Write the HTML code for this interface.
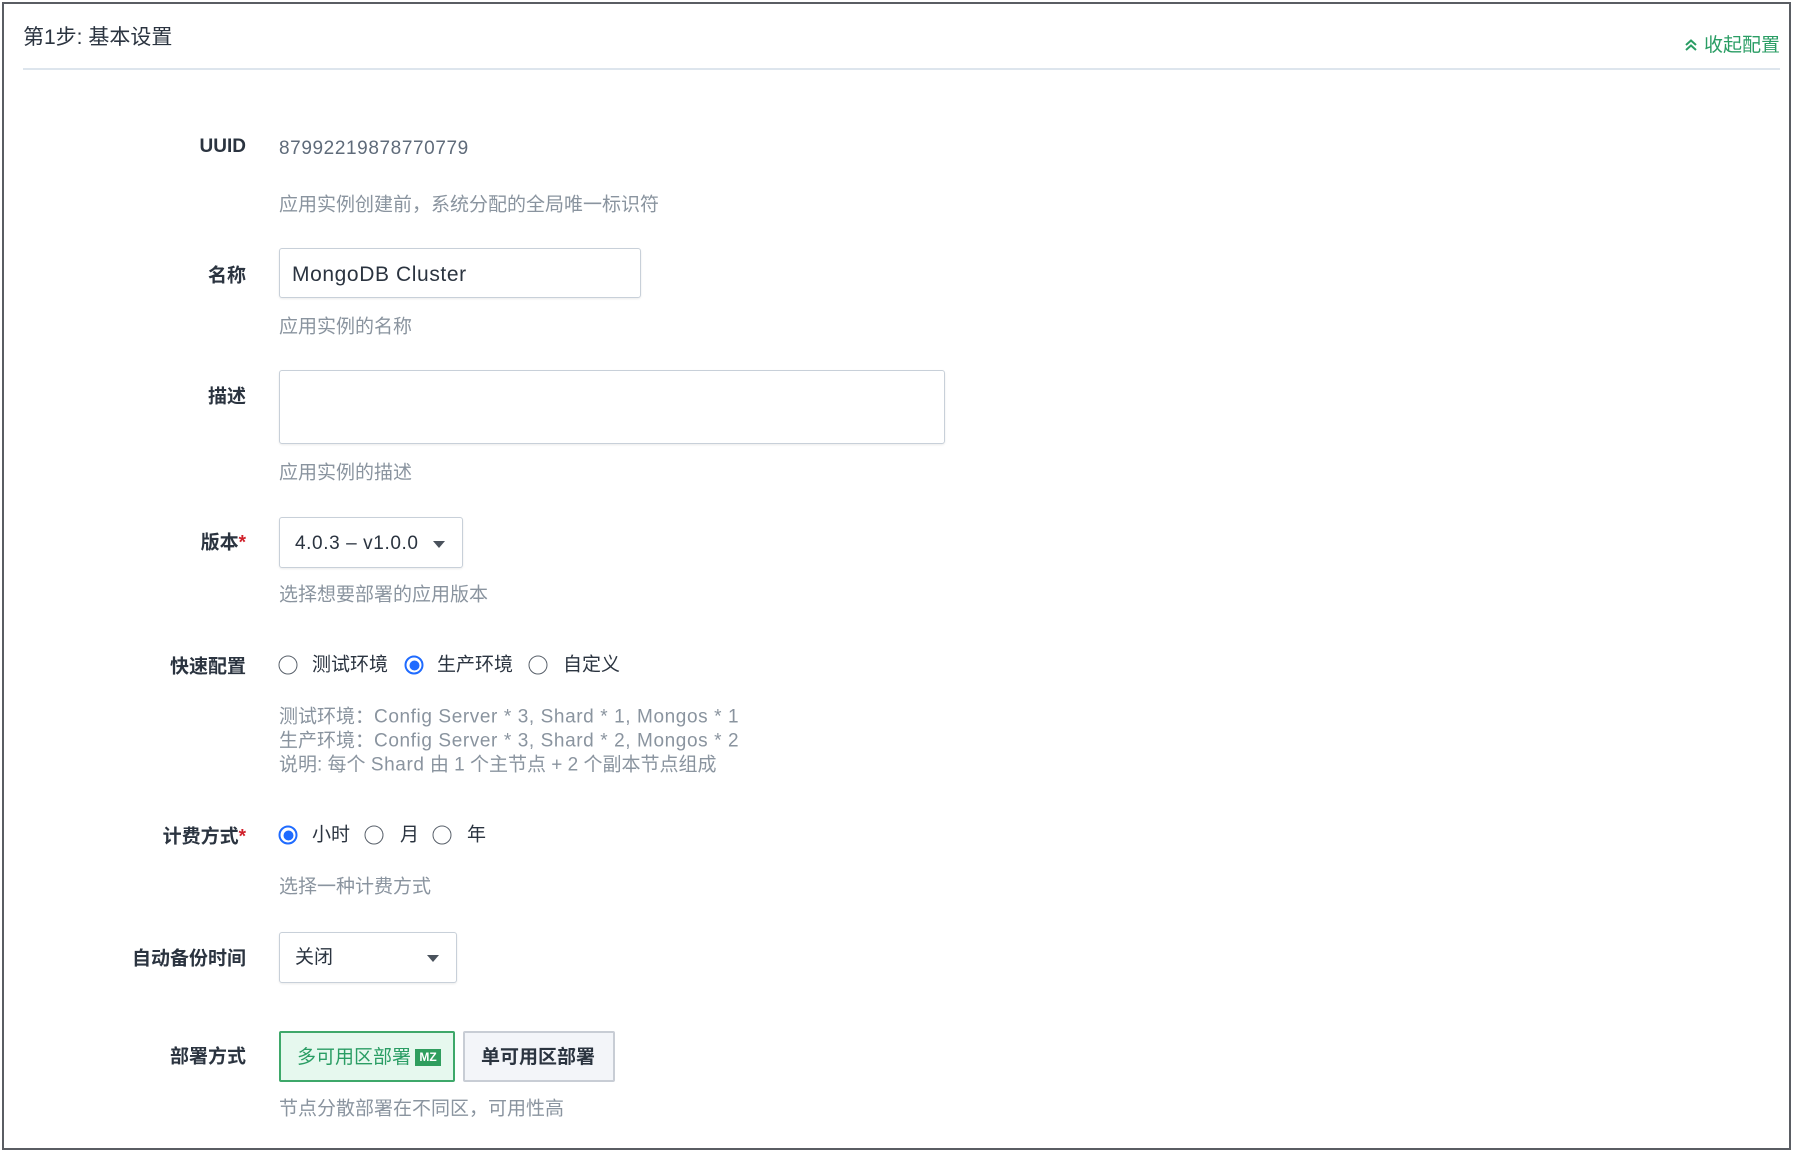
<!DOCTYPE html>
<html><head><meta charset="utf-8"><style>
*{box-sizing:border-box;margin:0;padding:0}
body{width:1794px;height:1152px;background:#fff;font-family:"Liberation Sans","Noto Sans CJK SC",sans-serif;position:relative;overflow:hidden;color:#2b3440}
.frame{position:absolute;left:2px;top:2px;width:1789px;height:1148px;border:2px solid #5a5d63}
.a{position:absolute;white-space:nowrap;line-height:1}
.lbl{position:absolute;right:1548px;font-size:19px;font-weight:bold;color:#2b3440;white-space:nowrap;transform:translateY(-50%)}
.help{position:absolute;left:279px;font-size:19px;color:#8a949f;white-space:nowrap;transform:translateY(-50%)}
.lat{letter-spacing:0.6px}
.box{position:absolute;border:1.5px solid #c8d0d9;border-radius:3px;background:#fff;box-shadow:0 1px 2px rgba(0,0,0,.08)}
.caret{position:absolute;width:0;height:0;border-left:6px solid transparent;border-right:6px solid transparent;border-top:7px solid #4a525c}
.r{position:absolute;width:19px;height:19px;border-radius:50%;border:1.5px solid #59616b;transform:translate(-50%,-50%);background:#fff}
.r.on{border:2px solid #1f6bff}
.r.on::after{content:"";position:absolute;left:2.5px;top:2.5px;width:10px;height:10px;border-radius:50%;background:#1f6bff}
.rt{position:absolute;font-size:19px;color:#2b3440;transform:translateY(-50%);white-space:nowrap}
.star{color:#d0202a}
</style></head><body>
<div class="frame"></div>
<div class="a" style="left:23px;top:27px;font-size:21px;color:#2b3440">第1步: 基本设置</div>
<div class="a" style="right:14px;top:36px;font-size:19px;color:#2a9d64">
<svg width="14" height="14" viewBox="0 0 14 14" style="vertical-align:-1px;margin-right:6px"><path d="M2 7 L7 2.5 L12 7 M2 12 L7 7.5 L12 12" fill="none" stroke="#2a9d64" stroke-width="2"/></svg>收起配置</div>
<div style="position:absolute;left:23px;top:68px;width:1757px;height:2px;background:#dde5ed"></div>

<div class="lbl" style="top:147px">UUID</div>
<div class="a lat" style="left:279px;top:139px;font-size:19px;color:#5f6b7a">87992219878770779</div>
<div class="help" style="top:203px">应用实例创建前，系统分配的全局唯一标识符</div>

<div class="lbl" style="top:274px">名称</div>
<div class="box" style="left:279px;top:248px;width:362px;height:50px"></div>
<div class="a lat" style="left:292px;top:264px;font-size:21px;color:#2b3440">MongoDB Cluster</div>
<div class="help" style="top:325px">应用实例的名称</div>

<div class="lbl" style="top:395px">描述</div>
<div class="box" style="left:279px;top:370px;width:666px;height:74px"></div>
<div class="help" style="top:471px">应用实例的描述</div>

<div class="lbl" style="top:541px">版本<span class="star">*</span></div>
<div class="box" style="left:279px;top:517px;width:184px;height:51px"></div>
<div class="a lat" style="left:295px;top:534px;font-size:19px;color:#2b3440">4.0.3 – v1.0.0</div>
<div class="caret" style="left:433px;top:541px"></div>
<div class="help" style="top:593px">选择想要部署的应用版本</div>

<div class="lbl" style="top:665px">快速配置</div>
<div class="r" style="left:288px;top:665px"></div><div class="rt" style="left:312px;top:663px">测试环境</div>
<div class="r on" style="left:414px;top:665px"></div><div class="rt" style="left:437px;top:663px">生产环境</div>
<div class="r" style="left:538px;top:665px"></div><div class="rt" style="left:563px;top:663px">自定义</div>
<div class="help" style="top:715px">测试环境：<span class="lat">Config Server * 3, Shard * 1, Mongos * 1</span></div>
<div class="help" style="top:739px">生产环境：<span class="lat">Config Server * 3, Shard * 2, Mongos * 2</span></div>
<div class="help" style="top:763px">说明: 每个 <span class="lat">Shard</span> 由 1 个主节点 + 2 个副本节点组成</div>

<div class="lbl" style="top:835px">计费方式<span class="star">*</span></div>
<div class="r on" style="left:288px;top:835px"></div><div class="rt" style="left:312px;top:833px">小时</div>
<div class="r" style="left:374px;top:835px"></div><div class="rt" style="left:400px;top:833px">月</div>
<div class="r" style="left:442px;top:835px"></div><div class="rt" style="left:467px;top:833px">年</div>
<div class="help" style="top:885px">选择一种计费方式</div>

<div class="lbl" style="top:957px">自动备份时间</div>
<div class="box" style="left:279px;top:932px;width:178px;height:51px"></div>
<div class="a" style="left:295px;top:948px;font-size:19px;color:#2b3440">关闭</div>
<div class="caret" style="left:427px;top:955px"></div>

<div class="lbl" style="top:1055px">部署方式</div>
<div style="position:absolute;left:279px;top:1031px;width:176px;height:51px;border:2px solid #3ea86a;background:#e6f8ee;border-radius:2px"></div>
<div class="a" style="left:297px;top:1048px;font-size:19px;color:#2a9d64">多可用区部署</div>
<div class="a" style="left:415px;top:1049px;width:26px;height:17px;background:#2f9e5e;color:#fff;font-size:12px;font-weight:bold;text-align:center;line-height:17px">MZ</div>
<div style="position:absolute;left:463px;top:1031px;width:152px;height:51px;border:2px solid #c8cdd5;background:#f3f5f9;border-radius:2px"></div>
<div class="a" style="left:481px;top:1048px;font-size:19px;font-weight:bold;color:#2b3440">单可用区部署</div>
<div class="help" style="top:1107px">节点分散部署在不同区，可用性高</div>
</body></html>
